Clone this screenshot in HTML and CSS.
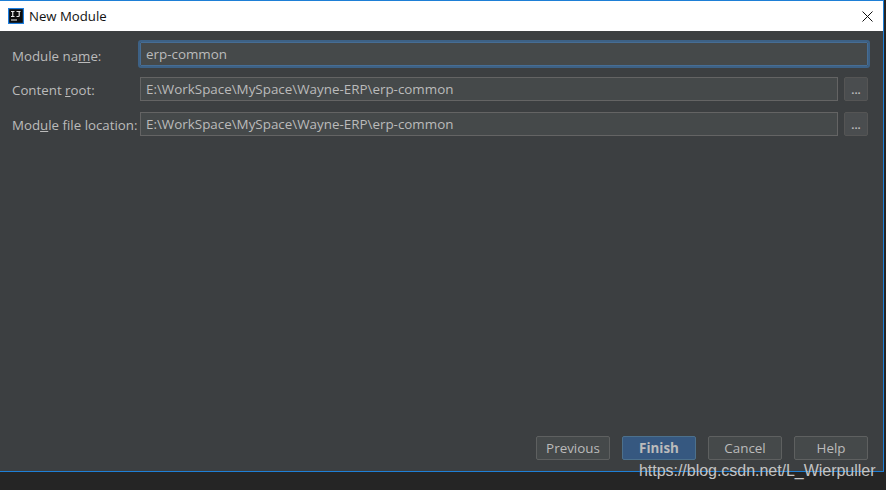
FILE: index.html
```html
<!DOCTYPE html>
<html lang="en">
<head>
<meta charset="utf-8">
<title>New Module</title>
<link rel="stylesheet" href="styles.css">
</head>
<body>
<div class="window">
  <header class="titlebar">
    <svg class="app-icon" width="16" height="16" viewBox="0 0 16 16">
      <rect x="0.6" y="0.6" width="14.8" height="14.8" fill="#0c0c0c" stroke="#1e7fe0" stroke-width="1.2"/>
      <path d="M3 3.5h3.5M4.75 3.5v5M3 8.5h3.5M8.5 3.5h4M11.2 3.5v4.2q0 .8-.8.8H8.5" fill="none" stroke="#e8e8e8" stroke-width="1.2"/>
      <rect x="3" y="11.5" width="6" height="1" fill="#f0f0f0"/>
    </svg>
    <span class="title">New Module</span>
    <svg class="close" width="11" height="11" viewBox="0 0 11 11">
      <path d="M0.5 0.5L10.5 10.5M10.5 0.5L0.5 10.5" fill="none" stroke="#111" stroke-width="1"/>
    </svg>
  </header>
  <main class="body">
    <form class="form">
      <label class="label label-first">Module na<u>m</u>e:</label>
      <div class="field field-focus">erp-common</div>
      <label class="label">Content <u>r</u>oot:</label>
      <div class="field">E:\WorkSpace\MySpace\Wayne-ERP\erp-common</div>
      <div class="browse">...</div>
      <label class="label">Mod<u>u</u>le file location:</label>
      <div class="field">E:\WorkSpace\MySpace\Wayne-ERP\erp-common</div>
      <div class="browse">...</div>
    </form>
    <footer class="actions">
      <div class="btn">Previous</div>
      <div class="btn btn-primary">Finish</div>
      <div class="btn">Cancel</div>
      <div class="btn">Help</div>
    </footer>
  </main>
</div>
<div class="watermark">https://blog.csdn.net/L_Wierpuller</div>
</body>
</html>
```
FILE: styles.css
```css
* { box-sizing: border-box; }
html, body { margin: 0; height: 100%; }
body {
  width: 886px;
  height: 490px;
  background: #252525;
  overflow: hidden;
  position: relative;
  font-family: "Open Sans", "Noto Sans", sans-serif;
  font-size: 13.4px;
}
.window {
  width: 884px;
  height: 472px;
  border-top: 1px solid #1e7fd6;
  border-right: 1px solid #1e7fd6;
  border-bottom: 1px solid #1e7fd6;
  display: flex;
  flex-direction: column;
}
.titlebar {
  height: 30px;
  background: #fff;
  display: flex;
  align-items: center;
  padding: 0 10px 0 8px;
  flex: none;
}
.title { margin-left: 5px; color: #111; font-size: 13.2px; flex: 1; }
.body {
  flex: 1;
  background: #3c3f41;
  display: flex;
  flex-direction: column;
  padding: 11px 15px 11px 12px;
  color: #bbbbbb;
}
.form {
  display: grid;
  grid-template-columns: 128px 698px 6px 24px;
  grid-template-rows: 24px 24px 24px;
  row-gap: 11px;
  align-items: center;
}
.label { white-space: nowrap; grid-column: 1; padding-top: 2px; font-size: 13.3px; }
.label-first { padding-top: 4px; }
.field {
  grid-column: 2;
  height: 24px;
  background: #45494a;
  border: 1px solid #646464;
  padding: 0 5px;
  line-height: 23px;
  color: #bbbbbb;
  white-space: nowrap;
}
.field-focus {
  grid-column: 2 / 5;
  outline: 2px solid #3d6185;
  border-color: #466d94;
  border-radius: 1px;
}
.browse {
  grid-column: 4;
  width: 24px;
  height: 24px;
  background: #4a4d4f;
  border: 1px solid #555;
  border-radius: 2px;
  text-align: center;
  line-height: 24px;
  font-size: 11px;
  font-weight: 700;
  color: #bbb;
}
.actions {
  margin-top: auto;
  display: flex;
  justify-content: flex-end;
  gap: 12px;
}
.btn {
  width: 74px;
  height: 24px;
  background: #45494a;
  border: 1px solid #5e6060;
  border-radius: 2px;
  text-align: center;
  line-height: 23px;
  color: #bbbbbb;
}
.btn-primary {
  background: #365880;
  border-color: #4c708c;
  font-weight: 700;
}
.watermark {
  position: absolute;
  left: 639px;
  top: 462px;
  font-family: "Liberation Sans", Arial, sans-serif;
  font-size: 16px;
  letter-spacing: -0.03px;
  color: #c4c4c4;
  white-space: nowrap;
}
```
